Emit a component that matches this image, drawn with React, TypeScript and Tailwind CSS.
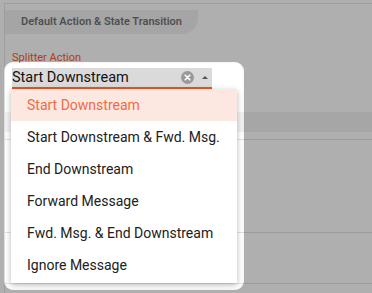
import React from "react";

const OPTIONS = [
  "Start Downstream",
  "Start Downstream & Fwd. Msg.",
  "End Downstream",
  "Forward Message",
  "Fwd. Msg. & End Downstream",
  "Ignore Message",
];

function ClearIcon() {
  return (
    <svg width="13" height="13" viewBox="0 0 13 13">
      <circle cx="6.5" cy="6.5" r="6.5" fill="#9a9a9a" />
      <path d="M4.2 4.2 L8.8 8.8 M8.8 4.2 L4.2 8.8" stroke="#fff" strokeWidth="1.6" strokeLinecap="round" />
    </svg>
  );
}

export default function App() {
  const selected = OPTIONS[0];
  return (
    <div className="relative h-[293px] w-[372px] overflow-hidden bg-white font-['Roboto',sans-serif]">
      {/* page behind the overlay */}
      <div className="h-[3px]" />
      <div className="ml-[4px] h-[290px] border-l border-t border-[#e6e6e6]">
        <div className="mt-[6px] flex h-[24px] w-[193px] items-center justify-center rounded-br-[16px] bg-[#f0f0f0] text-[11px] font-semibold text-[#757575]">
          Default Action &amp; State Transition
        </div>
        <div className="pl-[7px] pt-[17px] text-[11px] leading-[13px] text-[#ff5b26]">Splitter Action</div>
        <div className="ml-[7px] mt-[4px] flex h-[21px] w-[200px] items-center border-b-2 border-[#f0521e] bg-[#dadada]">
          <span className="mt-[2px] flex-1 text-[14.5px] leading-none text-[#111]">{selected}</span>
          <span className="mr-[8px] flex items-center">
            <ClearIcon />
          </span>
          <span className="mr-[4px] h-0 w-0 border-x-[3px] border-b-[3px] border-x-transparent border-b-[#555]" />
        </div>
        <div className="mt-[23px] h-[20px] bg-[#f2f2f2]" />
        <div className="mt-[7px] h-[93px] border-t border-[#e2e2e2]" />
        <div className="h-[51px] border-t border-[#e2e2e2]" />
        <div className="border-t border-[#e2e2e2]" />
      </div>

      {/* spotlight */}
      <div className="pointer-events-none absolute left-[4px] top-[62px] h-[228px] w-[240px] rounded-[9px] shadow-[0_0_0_999px_rgba(0,0,0,0.314),inset_0_0_3px_rgba(0,0,0,0.08)]" />

      {/* dropdown menu */}
      <ul className="absolute left-[11px] top-[89px] w-[226px] bg-white pb-[2px] shadow-[0_2px_6px_rgba(0,0,0,0.28)]">
        {OPTIONS.map((o) => (
          <li
            key={o}
            className={
              "flex h-[32px] items-center pl-[16px] text-[14px] " +
              (o === selected ? "bg-[#fce8e0] text-[#f26a45]" : "text-[#212121]")
            }
          >
            {o}
          </li>
        ))}
      </ul>
    </div>
  );
}
